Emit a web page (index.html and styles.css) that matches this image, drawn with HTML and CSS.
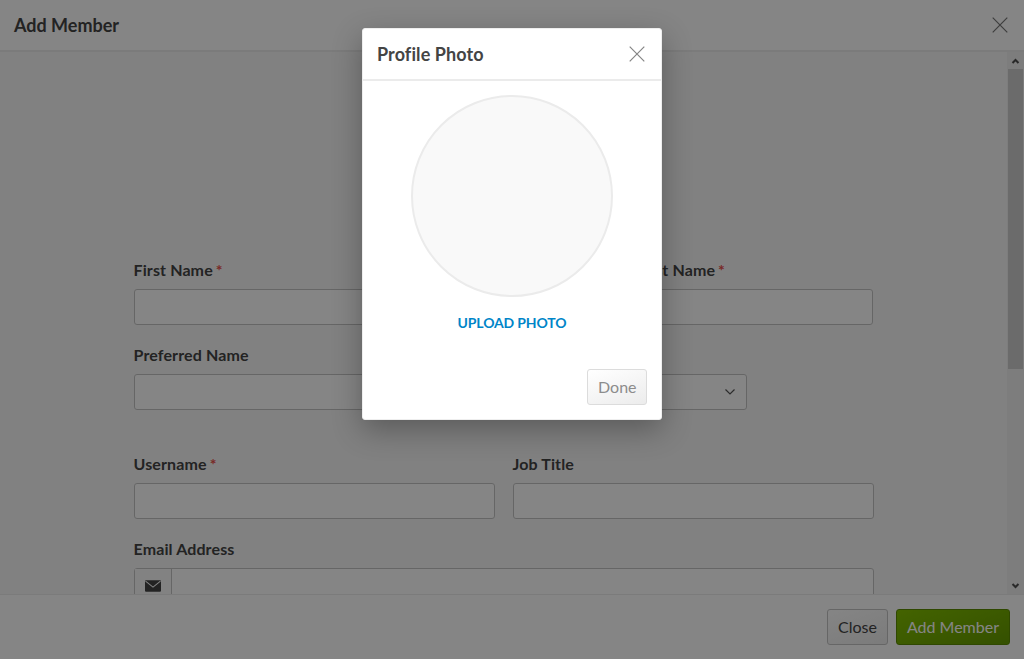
FILE: index.html
```html
<!DOCTYPE html>
<html lang="en">
<head>
<meta charset="utf-8">
<title>Add Member</title>
<link rel="stylesheet" href="styles.css">
</head>
<body>
<div class="panel">
  <header class="bar">
    <h1 class="title">Add Member</h1>
    <svg class="close-icon" viewBox="0 0 16 16"><path d="M.7.7l14.6 14.6M15.3.7L.7 15.3"/></svg>
  </header>
  <main class="content">
    <form class="form">
      <div class="row">
        <div class="field first"><label class="label">First Name <span class="req">*</span></label><div class="input"></div></div>
        <div class="field last"><label class="label">Last Name <span class="req">*</span></label><div class="input"></div></div>
      </div>
      <div class="row row-gap">
        <div class="field half"><label class="label">Preferred Name</label><div class="input"></div></div>
        <div class="field short"><label class="label">Suffix</label><div class="input select"><svg class="chevron" viewBox="0 0 10 6"><path d="M.5.5L5 5 9.5.5"/></svg></div></div>
      </div>
      <div class="row">
        <div class="field half"><label class="label">Username <span class="req">*</span></label><div class="input"></div></div>
        <div class="field half"><label class="label">Job Title</label><div class="input"></div></div>
      </div>
      <div class="row">
        <div class="field full"><label class="label">Email Address</label><div class="input group"><span class="addon"><svg class="mail" viewBox="0 0 15 11"><rect width="15" height="11" rx="1"/><path d="M.5 1l7 5.5 7-5.5"/></svg></span></div></div>
      </div>
    </form>
    <div class="scrollbar">
      <svg class="arrow" viewBox="0 0 8 6"><path d="M1 5l3-3 3 3"/></svg>
      <div class="thumb"></div>
      <svg class="arrow arrow-down" viewBox="0 0 8 6"><path d="M1 1l3 3 3-3"/></svg>
    </div>
  </main>
  <footer class="footer">
    <button class="btn">Close</button>
    <button class="btn primary">Add Member</button>
  </footer>
</div>
<div class="overlay">
  <section class="modal">
    <header class="bar modal-bar">
      <h2 class="title modal-title">Profile Photo</h2>
      <svg class="close-icon modal-close" viewBox="0 0 16 16"><path d="M.7.7l14.6 14.6M15.3.7L.7 15.3"/></svg>
    </header>
    <div class="modal-body">
      <div class="photo"></div>
      <a class="upload">UPLOAD PHOTO</a>
    </div>
    <div class="modal-footer"><button class="btn disabled">Done</button></div>
  </section>
</div>
</body>
</html>
```
FILE: styles.css
```css
* { box-sizing: border-box; }
body { margin: 0; font-family: Lato, "Liberation Sans", sans-serif; color: #444; overflow: hidden; }
svg { display: block; fill: none; }
.panel { height: 659px; display: flex; flex-direction: column; background: #fff; }
.bar { height: 52px; flex: none; display: flex; align-items: center; justify-content: space-between; padding: 0 16px 0 14px; border-bottom: 2px solid #ebebeb; }
.title { margin: 0; font-size: 18px; line-height: 24px; font-weight: 700; }
.modal-title { letter-spacing: .1px; }
.close-icon { width: 16px; height: 16px; stroke: #777; stroke-width: 1.2; }
.modal-close { stroke: #858585; }
.content { flex: 1; min-height: 0; display: flex; background: #f8f8f8; overflow: hidden; }
.form { flex: 1; padding: 208px 0 0 134px; }
.row { display: flex; gap: 18px; height: 85px; }
.row-gap { height: 109px; }
.field { flex: none; }
.first { width: 235px; }
.last { width: 234px; margin-left: 252px; }
.half { width: 361px; }
.short { width: 234px; }
.full { width: 740px; }
.label { display: block; height: 20px; margin-bottom: 9px; font-size: 16px; line-height: 20px; font-weight: 700; letter-spacing: .12px; white-space: nowrap; margin-left: -.5px; }
.req { color: #e8504a; margin-left: -1px; }
.input { height: 36px; background: #fff; border: 1px solid #c4c4c4; border-radius: 3px; }
.select { display: flex; align-items: center; justify-content: flex-end; padding-right: 11.5px; }
.chevron { width: 10px; height: 6px; stroke: #555; stroke-width: 1.2; }
.group { display: flex; }
.addon { width: 37px; border-right: 1px solid #c4c4c4; display: flex; align-items: center; justify-content: center; background: #fafafa; }
.mail { width: 16px; height: 12px; fill: #444; }
.mail path { fill: none; stroke: #fafafa; stroke-width: 1; }
.scrollbar { width: 17px; background: #f0f0f0; display: flex; flex-direction: column; align-items: center; padding: 6px 0 5px; }
.arrow { width: 9px; height: 6px; stroke: #505050; stroke-width: 2; }
.thumb { width: 15px; height: 300px; margin-top: 5px; background: #cdcdcd; }
.arrow-down { margin-top: auto; }
.footer { height: 65px; flex: none; display: flex; justify-content: flex-end; gap: 8px; padding: 14px; border-top: 1px solid #ebebeb; }
.btn { height: 36px; padding: 0 10px; font: 400 16px/20px Lato, sans-serif; color: #444; border: 1px solid #c4c4c4; border-radius: 3px; background: linear-gradient(160deg, #fff, #ececec); }
.primary { color: #fff; border-color: #5b8a00; background: linear-gradient(160deg, #82bf00, #659a00); }
.overlay { position: absolute; inset: 0; background: rgba(0, 0, 0, .48); display: flex; justify-content: center; align-items: flex-start; padding-top: 28px; }
.modal { width: 300px; height: 392px; display: flex; flex-direction: column; background: #fff; border: 1px solid #eee; border-radius: 3px; box-shadow: 0 10px 30px rgba(0, 0, 0, .3); }
.modal-body { flex: 1; display: flex; flex-direction: column; align-items: center; padding-top: 14px; }
.photo { width: 202px; height: 202px; border-radius: 50%; background: #f9f9f9; border: 2px solid #ebebeb; }
.upload { margin-top: 16px; font-size: 14px; line-height: 20px; font-weight: 700; color: #0085c8; letter-spacing: -.15px; }
.modal-footer { display: flex; justify-content: flex-end; padding: 0 14px 14px; }
.disabled { width: 60px; color: #8c8c8c; border-color: #dcdcdc; }
```
